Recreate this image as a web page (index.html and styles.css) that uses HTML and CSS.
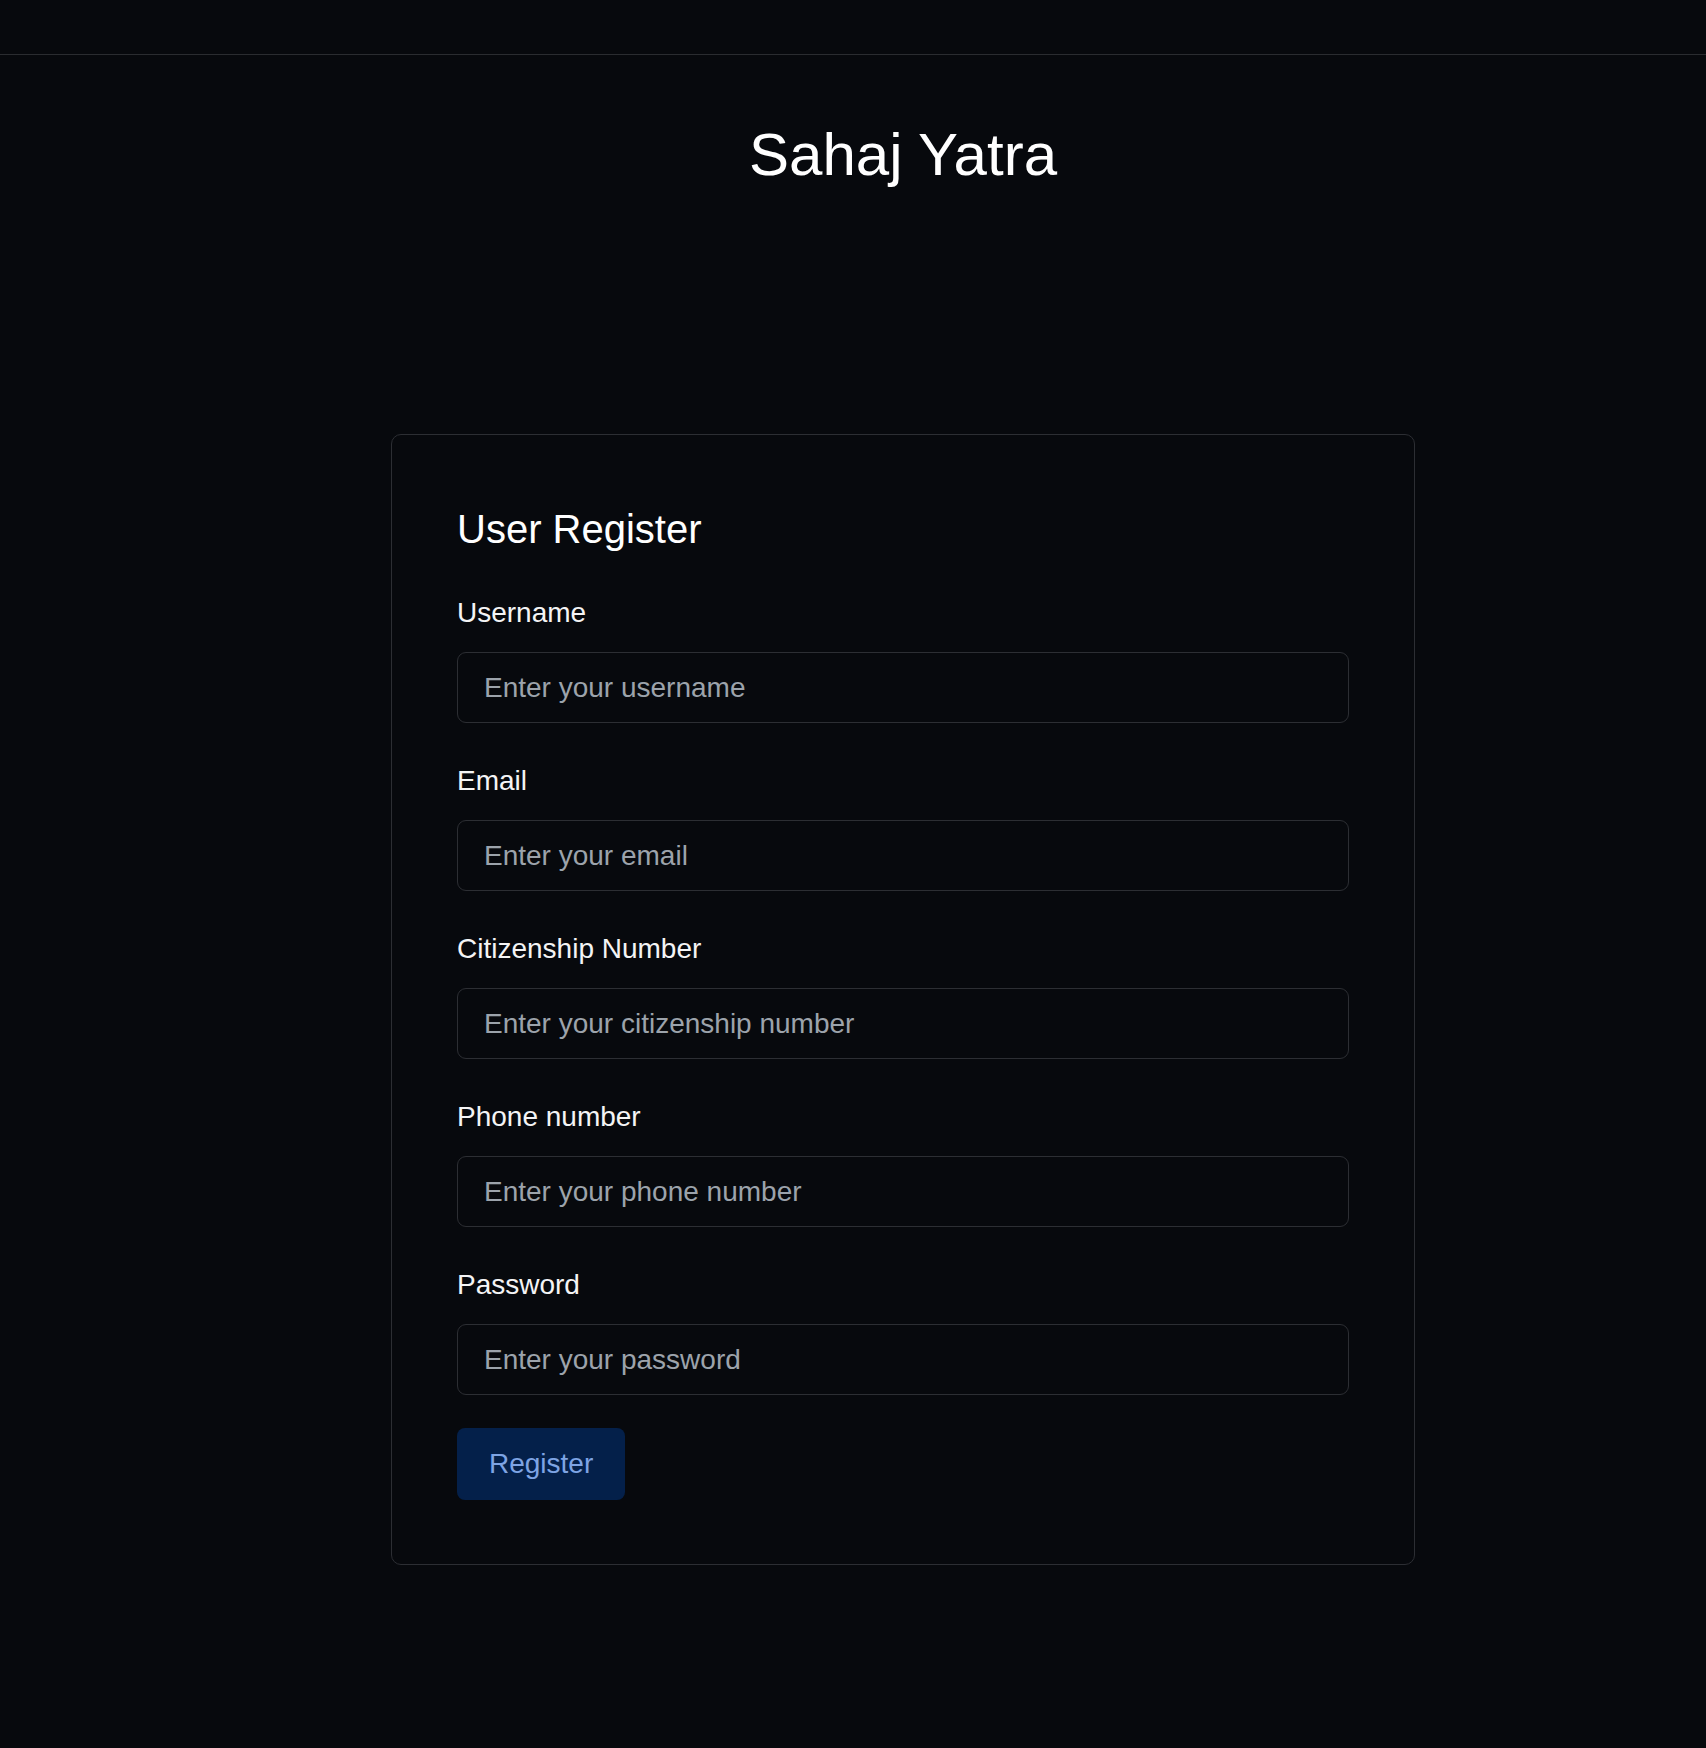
FILE: index.html
```html
<!DOCTYPE html>
<html lang="en">
<head>
<meta charset="utf-8">
<title>Sahaj Yatra - User Register</title>
<link rel="stylesheet" href="styles.css">
</head>
<body>
  <header class="topbar"></header>
  <main class="main">
    <h1 class="title">Sahaj Yatra</h1>
    <section class="card">
      <h2 class="card-title">User Register</h2>
      <form class="form">
        <div class="field">
          <label class="label" for="username">Username</label>
          <input class="input" id="username" type="text" placeholder="Enter your username">
        </div>
        <div class="field">
          <label class="label" for="email">Email</label>
          <input class="input" id="email" type="email" placeholder="Enter your email">
        </div>
        <div class="field">
          <label class="label" for="citizenship">Citizenship Number</label>
          <input class="input" id="citizenship" type="text" placeholder="Enter your citizenship number">
        </div>
        <div class="field">
          <label class="label" for="phone">Phone number</label>
          <input class="input" id="phone" type="text" placeholder="Enter your phone number">
        </div>
        <div class="field">
          <label class="label" for="password">Password</label>
          <input class="input" id="password" type="password" placeholder="Enter your password">
        </div>
        <div class="actions">
          <button class="btn" type="button">Register</button>
        </div>
      </form>
    </section>
  </main>
</body>
</html>
```
FILE: styles.css
```css
html {
  background: #07090d;
}
body {
  margin: 0;
  background: #07090d;
  color: #ffffff;
  font-family: "Liberation Sans", Arial, Helvetica, sans-serif;
  min-height: 1748px;
}
.topbar {
  height: 54px;
  border-bottom: 1px solid #2a2c30;
}
.main {
  padding-left: 100px;
  display: flex;
  flex-direction: column;
  align-items: center;
}
.title {
  margin: 64px 0 0;
  font-size: 60px;
  line-height: 72px;
  font-weight: 400;
  color: #ffffff;
}
.card {
  margin-top: 243px;
  width: 1024px;
  box-sizing: border-box;
  padding: 64px 65px;
  border: 1px solid #2c2e33;
  border-radius: 10px;
}
.card-title {
  margin: 0 0 38px;
  font-size: 40px;
  line-height: 60px;
  font-weight: 400;
  color: #ffffff;
}
.form {
  display: flex;
  flex-direction: column;
  gap: 42px;
}
.field {
  display: flex;
  flex-direction: column;
}
.label {
  display: block;
  font-size: 28px;
  line-height: 32px;
  margin-bottom: 23px;
  color: #f4f4f5;
}
.input {
  box-sizing: border-box;
  width: 100%;
  height: 71px;
  padding: 0 26px;
  border: 1px solid #2c2e33;
  border-radius: 9px;
  background: transparent;
  color: #ffffff;
  font-family: "Liberation Sans", Arial, Helvetica, sans-serif;
  font-size: 28px;
  outline: none;
}
.input::placeholder {
  color: #9ca3ab;
}
.actions {
  margin-top: -9px;
}
.btn {
  height: 72px;
  padding: 0 32px;
  border: none;
  border-radius: 8px;
  background: #04204a;
  color: #7ea4e4;
  font-family: "Liberation Sans", Arial, Helvetica, sans-serif;
  font-size: 28px;
  cursor: pointer;
}
```
